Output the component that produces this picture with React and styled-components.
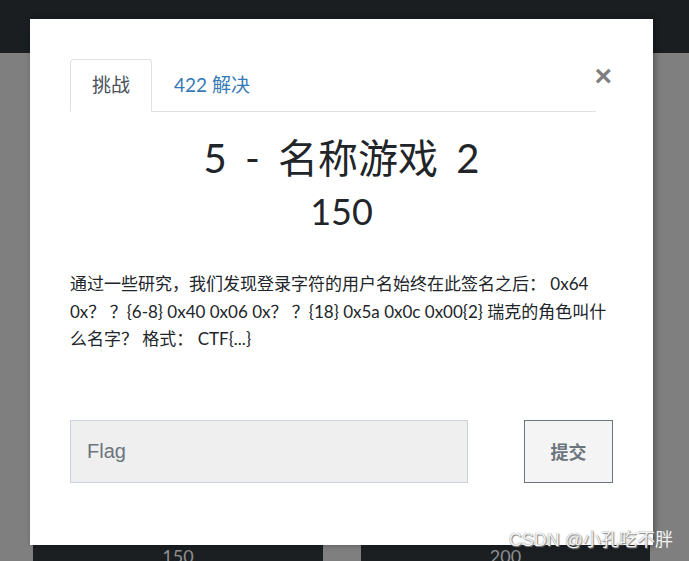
import styled, { createGlobalStyle } from 'styled-components'

const GlobalStyle = createGlobalStyle`
  html, body {
    margin: 0;
    padding: 0;
    background: #7f7f7f;
    font-family: Lato, "Noto Sans CJK SC", sans-serif;
    overflow: hidden;
  }
`

const Page = styled.div`
  position: relative;
  width: 689px;
  height: 561px;
  display: flex;
  flex-direction: column;
  background: #7f7f7f;
  overflow: hidden;
`

const Navbar = styled.div`
  height: 53px;
  background: #1b1e21;
  flex-shrink: 0;
`

const Board = styled.div`
  flex: 1;
  display: grid;
  grid-template-columns: 290px 289px;
  column-gap: 38px;
  align-content: end;
  padding: 0 0 0 33px;
`

const Tile = styled.div`
  height: 16px;
  background: #1c1f22;
  color: #8d8f91;
  font-size: 18px;
  text-align: center;
  line-height: 22px;
  overflow: hidden;
`

const Modal = styled.div`
  position: absolute;
  top: 19px;
  left: 30px;
  width: 623px;
  height: 526px;
  box-sizing: border-box;
  background: #fff;
  padding: 40px 40px 0 40px;
  display: flex;
  flex-direction: column;
  box-shadow: 2px 0 6px rgba(0, 0, 0, 0.35);
`

const Close = styled.button`
  position: absolute;
  top: 42px;
  right: 41px;
  border: none;
  background: none;
  padding: 0;
  font-family: "Liberation Sans", sans-serif;
  font-size: 30px;
  font-weight: 700;
  line-height: 1;
  color: #000;
  opacity: 0.5;
  cursor: pointer;
`

const Tabs = styled.ul`
  display: flex;
  list-style: none;
  margin: 0 17px 0 0;
  padding: 0;
  border-bottom: 1px solid #dee2e6;
`

const Tab = styled.li`
  padding: 10px 21px 11px 21px;
  margin-bottom: -1px;
  font-size: 19px;
  line-height: 30px;
  border: 1px solid ${(p) => (p.active ? '#dee2e6' : 'transparent')};
  border-bottom-color: ${(p) => (p.active ? '#fff' : 'transparent')};
  border-radius: 4px 4px 0 0;
  background: ${(p) => (p.active ? '#fff' : 'transparent')};
  color: ${(p) => (p.active ? '#495057' : '#3579b8')};
`

const Title = styled.h2`
  margin: 21px 0 0 0;
  text-align: center;
  font-size: 40px;
  font-weight: 400;
  line-height: 50px;
  word-spacing: 8px;
  color: #212529;
`

const Value = styled.h3`
  margin: 3px 0 0 0;
  text-align: center;
  font-size: 36px;
  font-weight: 400;
  line-height: 50px;
  color: #212529;
`

const Description = styled.p`
  margin: 34px 0 0 0;
  font-size: 17px;
  line-height: 27.5px;
  color: #212529;
`

const FlagRow = styled.div`
  display: flex;
  justify-content: space-between;
  margin-top: 67px;
`

const FlagInput = styled.input`
  width: 398px;
  height: 63px;
  box-sizing: border-box;
  padding: 0 16px;
  background: #efefef;
  border: 1px solid #ccd3dc;
  font-family: "Liberation Sans", Arial, sans-serif;
  font-size: 20px;
  color: #495057;
  outline: none;

  &::placeholder {
    color: #6c757d;
  }
`

const SubmitButton = styled.button`
  width: 89px;
  height: 63px;
  box-sizing: border-box;
  background: #f4f4f4;
  border: 1px solid #6c757d;
  color: #6c757d;
  font-family: "Noto Sans CJK SC", sans-serif;
  font-size: 18px;
  font-weight: 700;
  cursor: pointer;
`

const Watermark = styled.div`
  position: absolute;
  right: 16px;
  bottom: 10px;
  font-family: "Liberation Sans", "Noto Sans CJK SC", sans-serif;
  font-size: 18px;
  color: rgba(255, 255, 255, 0.92);
  text-shadow: 0 0 1px #777, 1px 1px 1px #888;
  pointer-events: none;
`

export default function App() {
  return (
    <Page>
      <GlobalStyle />
      <Navbar />
      <Board>
        <Tile>150</Tile>
        <Tile>200</Tile>
      </Board>
      <Modal>
        <Close aria-label="Close">×</Close>
        <Tabs>
          <Tab active>挑战</Tab>
          <Tab>422 解决</Tab>
        </Tabs>
        <Title>5 - 名称游戏 2</Title>
        <Value>150</Value>
        <Description>
          通过一些研究，我们发现登录字符的用户名始终在此签名之后： 0x64 0x？ ？{'{'}6-8{'}'} 0x40 0x06 0x？ ？{'{'}18{'}'} 0x5a 0x0c 0x00{'{'}2{'}'} 瑞克的角色叫什么名字？ 格式： CTF{'{'}...{'}'}
        </Description>
        <FlagRow>
          <FlagInput placeholder="Flag" />
          <SubmitButton>提交</SubmitButton>
        </FlagRow>
      </Modal>
      <Watermark>CSDN @小孔吃不胖</Watermark>
    </Page>
  )
}
